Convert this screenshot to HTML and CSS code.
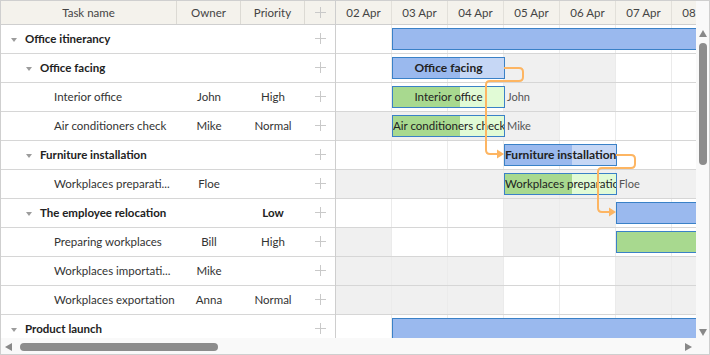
FILE: index.html
```html
<!DOCTYPE html>
<html lang="en">
  <head>
    <meta charset="UTF-8" />
    <meta name="viewport" content="width=device-width, initial-scale=1.0" />
    <title>Gantt</title>
    <link rel="stylesheet" href="styles.css">
  </head>
  <body>
    <div class="gantt">
      <div class="main">
        <div class="grid">
          <div class="head">
            <div class="hcell col-name">Task name</div>
            <div class="hcell col-owner">Owner</div>
            <div class="hcell col-prio">Priority</div>
            <div class="hcell col-add"><span class="plus"></span></div>
          </div>
          <div id="grid-body"></div>
        </div>
        <div class="timeline">
          <div class="scale" id="scale"></div>
          <div class="chart" id="chart">
            <svg class="links" width="392" height="319" viewBox="0 0 392 319">
              <path d="M168 43 H183 Q187 43 187 47 V52 Q187 56 183 56 H154 Q150 56 150 60 V125 Q150 129 154 129 H162" />
              <polygon points="161,124.5 168,129 161,133.5" />
              <path d="M280 130 H295 Q299 130 299 134 V139 Q299 143 295 143 H266 Q262 143 262 147 V183 Q262 187 266 187 H274" />
              <polygon points="273,182.5 280,187 273,191.5" />
            </svg>
          </div>
        </div>
        <div class="vscroll">
          <span class="arrow up"></span>
          <span class="thumb"></span>
          <span class="arrow down"></span>
        </div>
      </div>
      <div class="hscroll">
        <span class="arrow left"></span>
        <span class="thumb"></span>
        <span class="arrow right"></span>
      </div>
    </div>

    <script>
      const days = ["02 Apr", "03 Apr", "04 Apr", "05 Apr", "06 Apr", "07 Apr", "08 Apr"];
      const dayWidth = 56;

      const tasks = [
        { name: "Office itinerancy", level: 0, parent: true, off: [], bar: { start: 1, dur: 9, progress: 1 } },
        { name: "Office facing", level: 1, parent: true, off: [3, 4], bar: { start: 1, dur: 2, progress: 0.6, text: "Office facing" } },
        { name: "Interior office", level: 2, owner: "John", prio: "High", off: [3, 4], bar: { start: 1, dur: 2, progress: 0.6, text: "Interior office", label: "John" } },
        { name: "Air conditioners check", level: 2, owner: "Mike", prio: "Normal", off: [0, 1, 2, 3], bar: { start: 1, dur: 2, progress: 0.6, text: "Air conditioners check", label: "Mike" } },
        { name: "Furniture installation", level: 1, parent: true, off: [], bar: { start: 3, dur: 2, progress: 0.6, text: "Furniture installation" } },
        { name: "Workplaces preparati...", level: 2, owner: "Floe", off: [0, 1, 2, 3, 4, 5, 6], bar: { start: 3, dur: 2, progress: 0.6, text: "Workplaces preparation", label: "Floe" } },
        { name: "The employee relocation", level: 1, parent: true, prio: "Low", off: [3, 4], bar: { start: 5, dur: 4, progress: 1 } },
        { name: "Preparing workplaces", level: 2, owner: "Bill", prio: "High", off: [0, 3], bar: { start: 5, dur: 3, progress: 1 } },
        { name: "Workplaces importati...", level: 2, owner: "Mike", off: [0, 1, 2, 5, 6] },
        { name: "Workplaces exportation", level: 2, owner: "Anna", prio: "Normal", off: [0, 1, 2, 5, 6] },
        { name: "Product launch", level: 0, parent: true, off: [], bar: { start: 1, dur: 9, progress: 1 } },
      ];

      function renderScale() {
        let scale = document.getElementById("scale");
        scale.innerHTML = days.map((d) => `<div class="scell">${d}</div>`).join("");
      }

      function renderGrid() {
        let body = document.getElementById("grid-body");
        body.innerHTML = tasks
          .map((t) => {
            let toggle = t.parent ? `<span class="toggle"></span>` : "";
            return `<div class="grow ${t.parent ? "parent" : ""}">
              <div class="gcell col-name l${t.level}">${toggle}${t.name}</div>
              <div class="gcell col-owner">${t.owner || ""}</div>
              <div class="gcell col-prio">${t.prio || ""}</div>
              <div class="gcell col-add"><span class="plus"></span></div>
            </div>`;
          })
          .join("");
      }

      function renderChart() {
        let chart = document.getElementById("chart");
        let html = tasks
          .map((t) => {
            let cells = days
              .map((d, i) => `<div class="day ${t.off.includes(i) ? "off" : ""}"></div>`)
              .join("");
            let bar = "";
            if (t.bar) {
              let b = t.bar;
              let left = b.start * dayWidth;
              let width = b.dur * dayWidth + 1;
              bar = `<div class="bar ${t.parent ? "project" : "task"}" style="left:${left}px;width:${width}px">
                  <div class="progress" style="width:${b.progress * 100}%"></div>
                  <div class="bar-text">${b.text || ""}</div>
                </div>`;
              if (b.label) {
                bar += `<div class="side-label" style="left:${left + width + 2}px">${b.label}</div>`;
              }
            }
            return `<div class="trow">${cells}${bar}</div>`;
          })
          .join("");
        chart.insertAdjacentHTML("afterbegin", html);
      }

      renderScale();
      renderGrid();
      renderChart();
    </script>
  </body>
</html>
```

FILE: styles.css
```css
body {
  margin: 0;
  font-family: "Lato", "Liberation Sans", sans-serif;
  font-size: 11.5px;
  color: #333;
  background: #fff;
}
.gantt {
  width: 710px;
  height: 355px;
  box-sizing: border-box;
  border: 1px solid #cfcfcf;
  display: flex;
  flex-direction: column;
  overflow: hidden;
}
.main {
  display: flex;
  height: 337px;
  overflow: hidden;
}

/* grid */
.grid {
  width: 335px;
  flex-shrink: 0;
  box-sizing: border-box;
  border-right: 1px solid #cecece;
  overflow: hidden;
}
.head,
.scale {
  display: flex;
  height: 24px;
  box-sizing: border-box;
  border-bottom: 1px solid #cfcfcf;
  background: #f4f2ec;
}
.hcell {
  display: flex;
  align-items: center;
  justify-content: center;
  box-sizing: border-box;
  border-right: 1px solid #dcdad4;
  color: #444;
}
.hcell.col-add {
  border-right: none;
}
.col-name {
  width: 176px;
}
.col-owner,
.col-prio {
  width: 64px;
}
.col-add {
  width: 30px;
}
.grow {
  display: flex;
  align-items: center;
  height: 29px;
  box-sizing: border-box;
  padding-bottom: 2px;
  border-bottom: 1px solid #d6d6d6;
}
.gcell {
  box-sizing: border-box;
  flex-shrink: 0;
  white-space: nowrap;
  overflow: hidden;
}
.gcell.col-owner,
.gcell.col-prio {
  text-align: center;
}
.gcell.col-add {
  display: flex;
  justify-content: center;
  padding-top: 1px;
}
.l0 {
  padding-left: 10px;
}
.l1 {
  padding-left: 25px;
}
.l2 {
  padding-left: 53px;
}
.parent {
  font-weight: bold;
  color: #222;
}
.toggle {
  display: inline-block;
  width: 0;
  height: 0;
  border-left: 3.5px solid transparent;
  border-right: 3.5px solid transparent;
  border-top: 4px solid #9c9c9c;
  margin-right: 8px;
  vertical-align: middle;
}
.plus {
  display: inline-block;
  width: 11px;
  height: 11px;
  background: linear-gradient(#c9c9c9, #c9c9c9) center / 11px 1px no-repeat,
    linear-gradient(#c9c9c9, #c9c9c9) center / 1px 11px no-repeat;
}

/* timeline */
.timeline {
  width: 360px;
  flex-shrink: 0;
  overflow: hidden;
}
.scell {
  width: 56px;
  flex-shrink: 0;
  box-sizing: border-box;
  border-right: 1px solid #e2e0da;
  display: flex;
  align-items: center;
  justify-content: center;
  color: #444;
}
.chart {
  position: relative;
  width: 392px;
}
.trow {
  position: relative;
  display: flex;
  height: 29px;
  box-sizing: border-box;
  border-bottom: 1px solid #d6d6d6;
}
.day {
  width: 56px;
  flex-shrink: 0;
  box-sizing: border-box;
  border-right: 1px solid #ebebeb;
}
.day.off {
  background: #f0f0f0;
}
.bar {
  position: absolute;
  top: 3px;
  height: 22px;
  box-sizing: border-box;
  border: 1px solid #3a81c7;
  overflow: hidden;
}
.bar.project {
  background: #c6d7f5;
  font-weight: bold;
  font-size: 12px;
}
.bar.task {
  background: #e1fbd6;
}
.progress {
  height: 100%;
}
.project .progress {
  background: #9ab9ee;
}
.task .progress {
  background: #a8d98f;
}
.bar-text {
  position: absolute;
  inset: 0;
  line-height: 19px;
  text-align: center;
  white-space: nowrap;
  overflow: hidden;
  color: #222;
}
.side-label {
  position: absolute;
  top: 3px;
  line-height: 21px;
  color: #555;
  font-size: 11px;
}
.links {
  position: absolute;
  left: 0;
  top: 0;
  pointer-events: none;
}
.links path {
  fill: none;
  stroke: #fdb562;
  stroke-width: 2;
}
.links polygon {
  fill: #fdb562;
}

/* scrollbars */
.vscroll {
  width: 13px;
  flex-shrink: 0;
  box-sizing: border-box;
  padding: 29px 0 2px;
  background: #f9f9f9;
  display: flex;
  flex-direction: column;
  align-items: center;
}
.vscroll .thumb {
  width: 8px;
  height: 122px;
  margin-top: 6px;
  border-radius: 4px;
  background: #8c8c8c;
}
.vscroll .down {
  margin-top: auto;
}
.hscroll {
  height: 16px;
  box-sizing: border-box;
  padding: 2px 17px 0 4px;
  background: #f9f9f9;
  display: flex;
  align-items: center;
}
.hscroll .thumb {
  width: 198px;
  height: 8px;
  margin-left: 8px;
  border-radius: 4px;
  background: #8c8c8c;
}
.hscroll .right {
  margin-left: auto;
}
.arrow {
  display: block;
  width: 0;
  height: 0;
}
.arrow.up {
  border-left: 4.5px solid transparent;
  border-right: 4.5px solid transparent;
  border-bottom: 7px solid #888;
}
.arrow.down {
  border-left: 4.5px solid transparent;
  border-right: 4.5px solid transparent;
  border-top: 7px solid #888;
}
.arrow.left {
  border-top: 4.5px solid transparent;
  border-bottom: 4.5px solid transparent;
  border-right: 7px solid #888;
}
.arrow.right {
  border-top: 4.5px solid transparent;
  border-bottom: 4.5px solid transparent;
  border-left: 7px solid #888;
}
```
